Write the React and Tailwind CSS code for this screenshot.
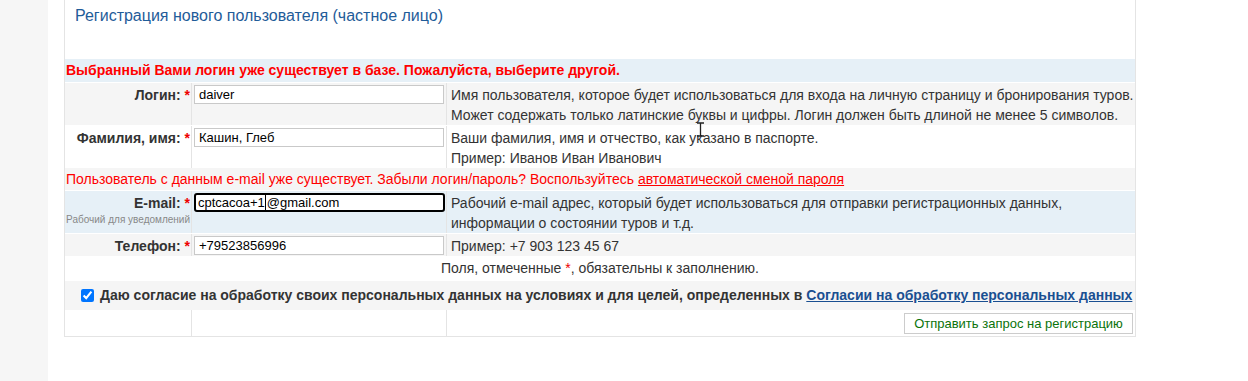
import React from 'react'

const font = { fontFamily: '"Liberation Sans", Arial, sans-serif' }

function Label({ children, note }) {
  return (
    <div className="border-r border-[#e4e4e4] pr-[1px] pt-[2px] text-right">
      <div className="text-[14px] leading-[20px] font-bold text-[#333]">
        {children}: <span className="text-[#e00]">*</span>
      </div>
      {note && <div className="mt-[1px] whitespace-nowrap text-[10px] leading-[12px] text-[#888]">{note}</div>}
    </div>
  )
}

function Input({ value, focused }) {
  if (focused) {
    return (
      <div className="border-r border-[#e4e4e4] px-[2px] pt-[2px]">
        <div className="flex h-[19px] w-[251px] items-center rounded-[3px] border-2 border-black bg-white pl-[2px] text-[13px] text-black">
          <span>cptcacoa+1</span>
          <span className="mx-[0.5px] inline-block h-[15px] w-px bg-black" />
          <span>@gmail.com</span>
        </div>
      </div>
    )
  }
  return (
    <div className="border-r border-[#e4e4e4] px-[2px] pt-[2px]">
      <div className="flex h-[19px] w-[250px] items-center border border-[#c9c9c9] bg-white pl-[4px] text-[13px] text-black">
        {value}
      </div>
    </div>
  )
}

function Desc({ children }) {
  return <div className="pl-[4px] pt-[2px] text-[14px] leading-[20px] text-[#333]">{children}</div>
}

export default function App() {
  return (
    <div style={font} className="flex h-[381px] w-[1248px] overflow-hidden bg-white">
      <div className="h-full w-[48px] bg-[#f6f6f6]" />
      <div className="pl-[16px]">
        <div className="relative w-[1072px] border-x border-b border-[#e4e4e4]">
          <div className="h-[59px] px-[10px] pt-[6px] text-[16px] leading-[20px] text-[#1f5c99]">
            Регистрация нового пользователя (частное лицо)
          </div>

          <div className="flex h-[23px] items-center bg-[#e6f0f7] pl-[1px] text-[14px] font-bold text-[#f00]">
            Выбранный Вами логин уже существует в базе. Пожалуйста, выберите другой.
          </div>

          <div className="mt-px grid h-[42px] grid-cols-[127px_255px_1fr] bg-[#f5f5f5]">
            <Label>Логин</Label>
            <Input value="daiver" />
            <Desc>
              Имя пользователя, которое будет использоваться для входа на личную страницу и бронирования туров.
              <br />
              Может содержать только латинские буквы и цифры. Логин должен быть длиной не менее 5 символов.
            </Desc>
          </div>

          <div className="mt-px grid h-[41px] grid-cols-[127px_255px_1fr] bg-white">
            <Label>Фамилия, имя</Label>
            <Input value="Кашин, Глеб" />
            <Desc>
              Ваши фамилия, имя и отчество, как указано в паспорте.
              <br />
              Пример: Иванов Иван Иванович
            </Desc>
          </div>

          <div className="mt-px flex h-[22px] items-center bg-[#f5f5f5] pl-[1px] text-[14px] text-[#f00]">
            Пользователь с данным e-mail уже существует. Забыли логин/пароль? Воспользуйтесь&nbsp;
            <a className="underline">автоматической сменой пароля</a>
          </div>

          <div className="mt-px grid h-[42px] grid-cols-[127px_255px_1fr] bg-[#e6f0f7]">
            <Label note="Рабочий для уведомлений">E-mail</Label>
            <Input focused />
            <Desc>
              Рабочий e-mail адрес, который будет использоваться для отправки регистрационных данных,
              <br />
              информации о состоянии туров и т.д.
            </Desc>
          </div>

          <div className="mt-px grid h-[22px] grid-cols-[127px_255px_1fr] bg-[#f5f5f5]">
            <Label>Телефон</Label>
            <Input value="+79523856996" />
            <Desc>Пример: +7 903 123 45 67</Desc>
          </div>

          <div className="mt-px flex h-[23px] items-center justify-center text-[14px] text-[#333]">
            Поля, отмеченные&nbsp;<span className="text-[#e00]">*</span>, обязательны к заполнению.
          </div>

          <div className="mt-px flex h-[29px] items-center bg-[#f5f5f5] pl-[16px] text-[14px] font-bold text-[#333]">
            <input type="checkbox" checked readOnly className="m-0 h-[13px] w-[13px] accent-[#0075ff]" />
            <span className="ml-[6px]">
              Даю согласие на обработку своих персональных данных на условиях и для целей, определенных в{' '}
              <a className="text-[#1a4f91] underline">Согласии на обработку персональных данных</a>
            </span>
          </div>

          <div className="grid h-[26px] grid-cols-[127px_255px_1fr]">
            <div className="border-r border-[#e4e4e4]" />
            <div className="border-r border-[#e4e4e4]" />
            <div className="flex items-center justify-end pr-[2px]">
              <button className="h-[21px] w-[229px] border border-[#ccc] bg-white text-[13px] text-[#0a730a]">
                Отправить запрос на регистрацию
              </button>
            </div>
          </div>

          <svg className="absolute left-[631px] top-[122px]" width="9" height="15" viewBox="0 0 9 15">
            <path d="M1 1h7M4.5 1v13M1 14h7" stroke="#222" strokeWidth="1.3" fill="none" />
          </svg>
        </div>
      </div>
    </div>
  )
}
